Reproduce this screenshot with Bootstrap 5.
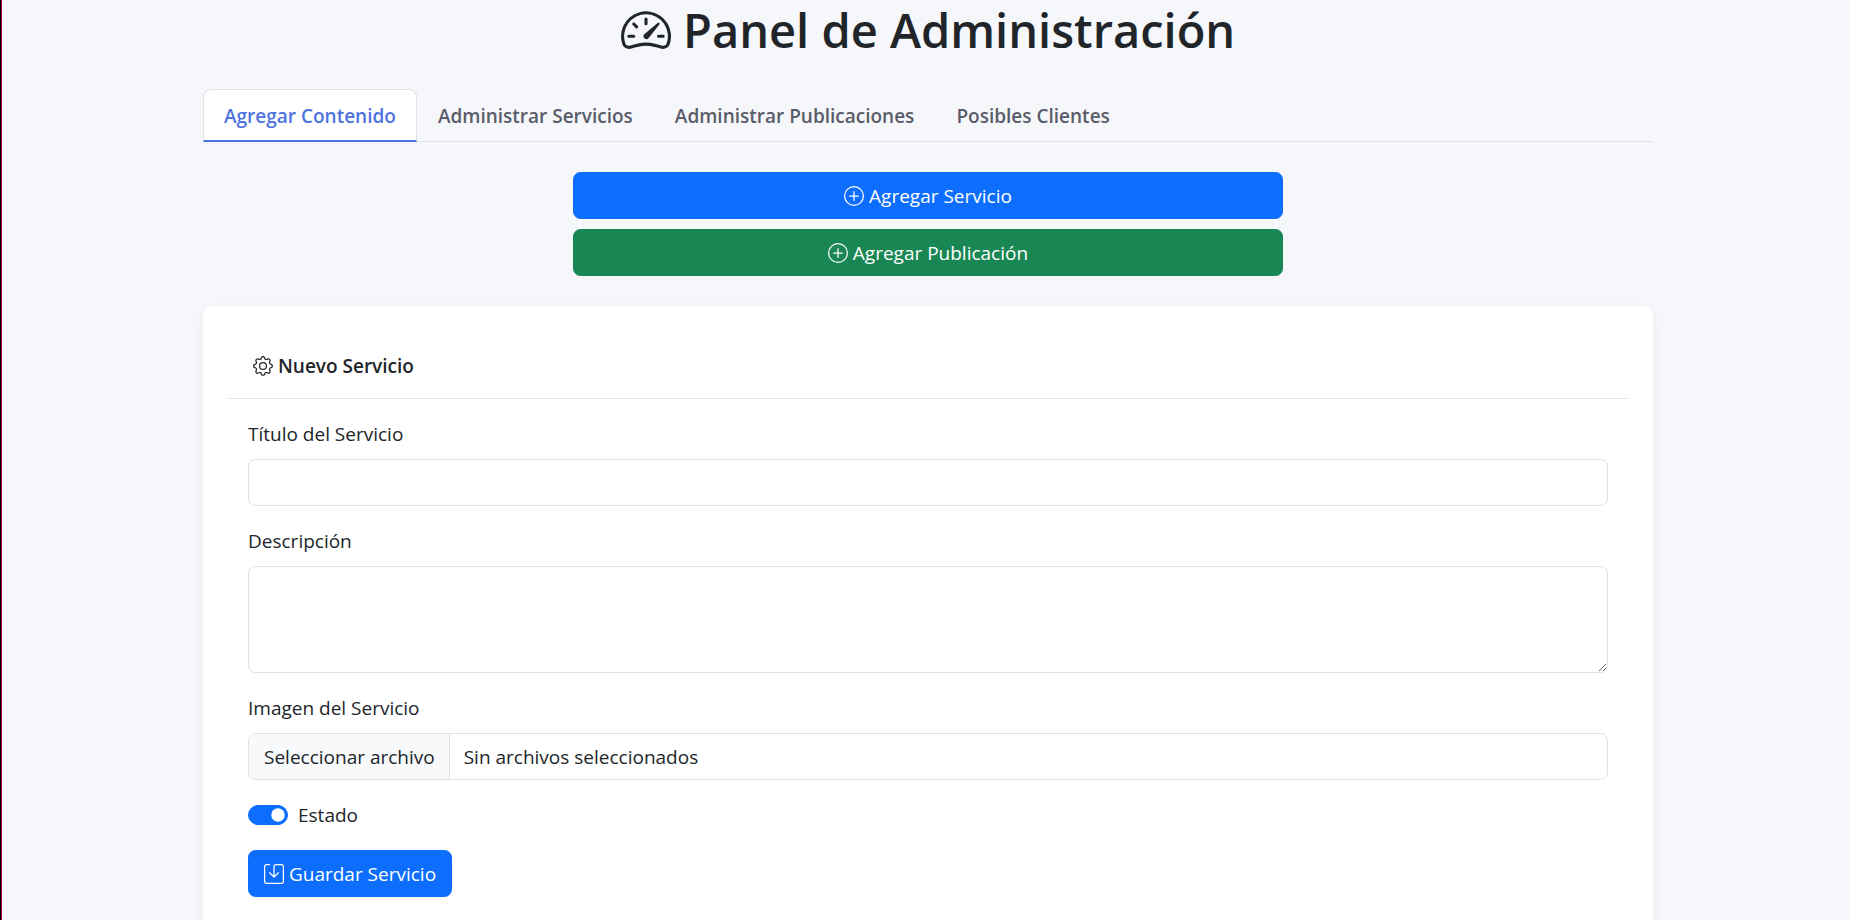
<!DOCTYPE html>
<html lang="es">
<head>
<meta charset="utf-8">
<meta name="viewport" content="width=device-width, initial-scale=1">
<title>Panel de Administración</title>
<link href="https://cdn.jsdelivr.net/npm/bootstrap@5.3.0/dist/css/bootstrap.min.css" rel="stylesheet">
<style>
  html { font-size: 20px; border-left: 1px solid #000; }
  body {
    background: #f5f7fb;
    border-left: 1px solid #a00d3c;
    padding-left: 4px;
    font-family: "Open Sans", "Noto Sans", sans-serif;
    font-size: 19px;
    line-height: 30px;
    color: #212529;
  }
  .panel-wrap { max-width: 1500px; padding: 0 25px; }
  .panel-title { font-size: 47px; line-height: 61px; font-weight: 600; margin-bottom: 28px; }
  .icon { width: 20px; height: 20px; fill: currentColor; vertical-align: -3px; }
  .panel-title .icon { width: 50px; height: 50px; vertical-align: -7px; }
  .btn, .form-control { font-size: 19px; line-height: 30px; }
  .nav-tabs .nav-link { color: #5a5c69; font-weight: 600; font-size: 19px; padding: 11px 20px 9px; border-bottom-width: 2px; }
  .nav-tabs .nav-link.active { color: #4e73df; border-bottom-color: #4e73df; }
  .panel-card { border: 0; border-radius: 10px; padding: 25px; box-shadow: 0 3px 14px rgba(58, 59, 99, .04); }
  .panel-card .card-header { background: none; border-bottom: 1px solid #e3e3f3; padding: 20px 25px 17px; font-weight: 600; }
  .form-label { margin-bottom: 10px; }
  textarea.form-control { height: 107px; }
  .file-box { overflow: hidden; padding: 0; cursor: pointer; }
  .file-btn { background: #f8f9fa; border-right: 1px solid #dee2e6; padding: 8px 14px 7px 15px; }
  .file-name { padding: 8px 14px 7px; }
  .form-switch { padding-left: 50px; }
  .form-switch .form-check-input { width: 40px; height: 20px; margin-top: 5px; margin-left: -50px; }
</style>
</head>
<body>
<main class="container-fluid panel-wrap">
  <h1 class="panel-title text-center">
    <svg class="icon" viewBox="0 0 16 16" aria-hidden="true"><path d="M8 4a.5.5 0 0 1 .5.5V6a.5.5 0 0 1-1 0V4.500A.5.5 0 0 1 8 4M3.732 5.732a.5.5 0 0 1 .707 0l.915.914a.5.5 0 1 1-.708.708l-.914-.915a.5.5 0 0 1 0-.707M2 10a.5.5 0 0 1 .5-.5h1.586a.5.5 0 0 1 0 1H2.500A.5.5 0 0 1 2 10m9.500 0a.5.5 0 0 1 .5-.5h1.500a.5.5 0 0 1 0 1H12a.5.5 0 0 1-.5-.5m.754-4.246a.39.39 0 0 0-.527-.02L7.547 9.310a.91.91 0 1 0 1.302 1.258l3.434-4.297a.39.39 0 0 0-.029-.518z"/><path fill-rule="evenodd" d="M0 10a8 8 0 1 1 15.547 2.661c-.442 1.253-1.845 1.602-2.932 1.250C11.309 13.488 9.475 13 8 13c-1.474 0-3.310.488-4.615.911-1.087.352-2.490.003-2.932-1.250A8 8 0 0 1 0 10m8-7a7 7 0 0 0-6.603 9.329c.203.575.923.876 1.680.630C4.397 12.533 6.358 12 8 12s3.604.532 4.923.960c.757.245 1.477-.056 1.680-.631A7 7 0 0 0 8 3"/></svg>
    Panel de Administración
  </h1>

  <ul class="nav nav-tabs mb-4">
    <li class="nav-item"><a class="nav-link active" aria-current="page" href="#agregar">Agregar Contenido</a></li>
    <li class="nav-item"><a class="nav-link" href="#servicios">Administrar Servicios</a></li>
    <li class="nav-item"><a class="nav-link" href="#publicaciones">Administrar Publicaciones</a></li>
    <li class="nav-item"><a class="nav-link" href="#clientes">Posibles Clientes</a></li>
  </ul>

  <div class="row justify-content-center mb-4">
    <div class="col-md-6 d-grid gap-2">
      <button type="button" class="btn btn-primary">
        <svg class="icon" viewBox="0 0 16 16" aria-hidden="true"><path d="M8 15A7 7 0 1 1 8 1a7 7 0 0 1 0 14m0 1A8 8 0 1 0 8 0a8 8 0 0 0 0 16"/><path d="M8 4a.5.5 0 0 1 .5.5v3h3a.5.5 0 0 1 0 1h-3v3a.5.5 0 0 1-1 0v-3h-3a.5.5 0 0 1 0-1h3v-3A.5.5 0 0 1 8 4"/></svg>
        Agregar Servicio</button>
      <button type="button" class="btn btn-success">
        <svg class="icon" viewBox="0 0 16 16" aria-hidden="true"><path d="M8 15A7 7 0 1 1 8 1a7 7 0 0 1 0 14m0 1A8 8 0 1 0 8 0a8 8 0 0 0 0 16"/><path d="M8 4a.5.5 0 0 1 .5.5v3h3a.5.5 0 0 1 0 1h-3v3a.5.5 0 0 1-1 0v-3h-3a.5.5 0 0 1 0-1h3v-3A.5.5 0 0 1 8 4"/></svg>
        Agregar Publicación</button>
    </div>
  </div>

  <section class="card panel-card" id="agregar">
    <div class="card-header">
      <svg class="icon" viewBox="0 0 16 16" aria-hidden="true"><path d="M8 4.754a3.246 3.246 0 1 0 0 6.492 3.246 3.246 0 0 0 0-6.492M5.754 8a2.246 2.246 0 1 1 4.492 0 2.246 2.246 0 0 1-4.492 0"/><path d="M9.796 1.343c-.527-1.790-3.065-1.790-3.592 0l-.094.319a.873.873 0 0 1-1.255.520l-.292-.160c-1.640-.892-3.433.902-2.540 2.541l.159.292a.873.873 0 0 1-.520 1.255l-.319.094c-1.790.527-1.790 3.065 0 3.592l.319.094a.873.873 0 0 1 .520 1.255l-.160.292c-.892 1.640.901 3.434 2.541 2.540l.292-.159a.873.873 0 0 1 1.255.520l.094.319c.527 1.790 3.065 1.790 3.592 0l.094-.319a.873.873 0 0 1 1.255-.520l.292.160c1.640.893 3.434-.902 2.540-2.541l-.159-.292a.873.873 0 0 1 .520-1.255l.319-.094c1.790-.527 1.790-3.065 0-3.592l-.319-.094a.873.873 0 0 1-.520-1.255l.160-.292c.893-1.640-.902-3.433-2.541-2.540l-.292.159a.873.873 0 0 1-1.255-.520zm-2.633.283c.246-.835 1.428-.835 1.674 0l.094.319a1.873 1.873 0 0 0 2.693 1.115l.291-.160c.764-.415 1.600.420 1.184 1.185l-.159.292a1.873 1.873 0 0 0 1.116 2.692l.318.094c.835.246.835 1.428 0 1.674l-.319.094a1.873 1.873 0 0 0-1.115 2.693l.160.291c.415.764-.420 1.600-1.185 1.184l-.291-.159a1.873 1.873 0 0 0-2.693 1.116l-.094.318c-.246.835-1.428.835-1.674 0l-.094-.319a1.873 1.873 0 0 0-2.692-1.115l-.292.160c-.764.415-1.600-.420-1.184-1.185l.159-.291A1.873 1.873 0 0 0 1.945 8.930l-.319-.094c-.835-.246-.835-1.428 0-1.674l.319-.094A1.873 1.873 0 0 0 3.060 4.377l-.160-.292c-.415-.764.420-1.600 1.185-1.184l.292.159a1.873 1.873 0 0 0 2.692-1.115z"/></svg>
      Nuevo Servicio
    </div>
    <form class="card-body p-3">
      <div class="mb-3">
        <label for="titulo" class="form-label d-block">Título del Servicio</label>
        <input type="text" class="form-control" id="titulo">
      </div>
      <div class="mb-3">
        <label for="descripcion" class="form-label d-block">Descripción</label>
        <textarea class="form-control d-block" id="descripcion" rows="3"></textarea>
      </div>
      <div class="mb-3">
        <label for="imagen" class="form-label d-block">Imagen del Servicio</label>
        <label for="imagen" class="form-control file-box d-flex position-relative">
          <input type="file" class="visually-hidden" id="imagen">
          <span class="file-btn">Seleccionar archivo</span>
          <span class="file-name">Sin archivos seleccionados</span>
        </label>
      </div>
      <div class="form-check form-switch mb-3">
        <input class="form-check-input" type="checkbox" role="switch" id="estado" checked>
        <label class="form-check-label" for="estado">Estado</label>
      </div>
      <button type="submit" class="btn btn-primary">
        <svg class="icon" viewBox="0 0 16 16" aria-hidden="true"><path d="M2 1a1 1 0 0 0-1 1v12a1 1 0 0 0 1 1h12a1 1 0 0 0 1-1V2a1 1 0 0 0-1-1H9.500a1 1 0 0 0-1 1v7.293l2.646-2.647a.5.5 0 0 1 .708.708l-3.500 3.500a.5.5 0 0 1-.708 0l-3.500-3.500a.5.5 0 1 1 .708-.708L7.500 9.293V2a2 2 0 0 1 2-2H14a2 2 0 0 1 2 2v12a2 2 0 0 1-2 2H2a2 2 0 0 1-2-2V2a2 2 0 0 1 2-2h2.500a.5.5 0 0 1 0 1z"/></svg>
        Guardar Servicio</button>
    </form>
  </section>
</main>
<script src="https://cdn.jsdelivr.net/npm/bootstrap@5.3.0/dist/js/bootstrap.bundle.min.js"></script>
</body>
</html>
